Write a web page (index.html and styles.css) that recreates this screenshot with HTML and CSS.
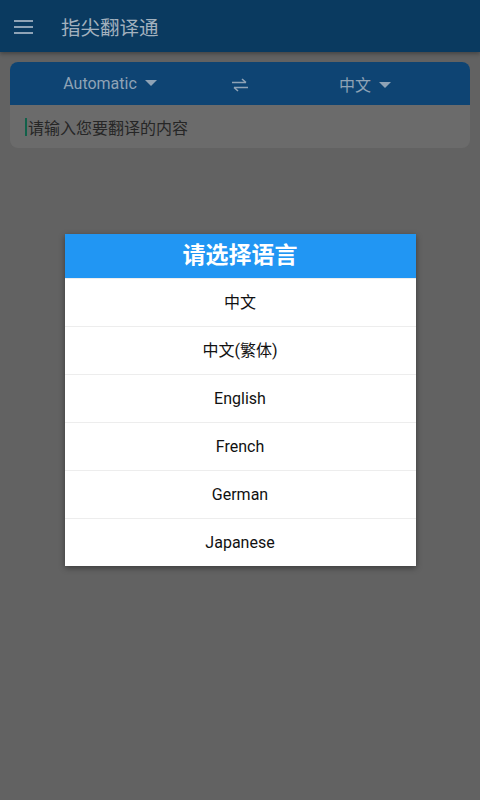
FILE: index.html
```html
<!DOCTYPE html>
<html lang="zh">
	<head>
		<meta charset="UTF-8" />
		<meta name="viewport" content="width=device-width, initial-scale=1.0" />
		<title>指尖翻译通</title>
		<link rel="stylesheet" href="styles.css">
	</head>
	<body>
		<div id="app">
			<header class="toolbar">
				<svg class="menu" width="20" height="16" viewBox="0 0 20 16">
					<rect x="0" y="1" width="19" height="2" fill="#8fa3b6"/>
					<rect x="0" y="7" width="19" height="2" fill="#8fa3b6"/>
					<rect x="0" y="13" width="19" height="2" fill="#8fa3b6"/>
				</svg>
				<div class="title">指尖翻译通</div>
			</header>

			<section class="card">
				<div class="langs">
					<div class="lang">Automatic <span class="caret"></span></div>
					<svg class="swap" width="18" height="16" viewBox="0 0 18 16">
						<path d="M1 5.5H15M11 2L15 5.5" stroke="#8fa3b6" stroke-width="1.6" fill="none"/>
						<path d="M17 10.5H3M7 14L3 10.5" stroke="#8fa3b6" stroke-width="1.6" fill="none"/>
					</svg>
					<div class="lang">中文 <span class="caret"></span></div>
				</div>
				<div class="input"><span class="cursor"></span>请输入您要翻译的内容</div>
			</section>
		</div>

		<div class="overlay">
			<div class="dialog">
				<div class="dialog-title">请选择语言</div>
				<div class="item">中文</div>
				<div class="item">中文(繁体)</div>
				<div class="item">English</div>
				<div class="item">French</div>
				<div class="item">German</div>
				<div class="item">Japanese</div>
			</div>
		</div>
	</body>
</html>
```

FILE: styles.css
```css
body {
	margin: 0;
	font-family: Roboto, "Noto Sans CJK SC", sans-serif;
	background-color: #626262;
}
#app {
	height: 800px;
}

.toolbar {
	height: 52px;
	display: flex;
	align-items: center;
	background-color: #0a3a60;
	box-shadow: 0 2px 4px rgba(0, 0, 0, 0.3);
}
.menu {
	margin-left: 14px;
	margin-top: 2px;
}
.title {
	margin-left: 27px;
	font-size: 19.5px;
	color: #a3b1be;
}

.card {
	margin: 10px;
	border-radius: 8px;
	overflow: hidden;
	background-color: #6b6b6b;
}
.langs {
	height: 43px;
	display: grid;
	grid-template-columns: 200px 60px 190px;
	align-items: center;
	justify-items: center;
	background-color: #0e4473;
}
.lang {
	font-size: 16px;
	color: #8fa3b6;
}
.swap {
	margin-top: 2px;
}
.caret {
	display: inline-block;
	width: 0;
	height: 0;
	margin-left: 4px;
	vertical-align: 3px;
	border-left: 6px solid transparent;
	border-right: 6px solid transparent;
	border-top: 6px solid #8fa3b6;
}
.input {
	height: 43px;
	display: flex;
	align-items: center;
	padding-left: 15px;
	font-size: 16px;
	color: #262626;
}
.cursor {
	width: 2px;
	height: 18px;
	background-color: #12614a;
	margin-right: 1px;
}

.overlay {
	position: absolute;
	top: 0;
	left: 0;
	right: 0;
	bottom: 0;
	display: flex;
	justify-content: center;
	align-items: flex-start;
	padding-top: 234px;
}
.dialog {
	width: 351px;
	background-color: #fff;
	box-shadow: 0 2px 6px rgba(0, 0, 0, 0.4);
}
.dialog-title {
	height: 44px;
	line-height: 44px;
	text-align: center;
	font-size: 23px;
	font-weight: bold;
	color: #fff;
	background-color: #2196f3;
}
.item {
	height: 48px;
	line-height: 48px;
	text-align: center;
	font-size: 16px;
	color: #111;
	border-top: 1px solid #ededed;
	box-sizing: border-box;
}
.item:first-of-type {
	border-top: none;
}
```
